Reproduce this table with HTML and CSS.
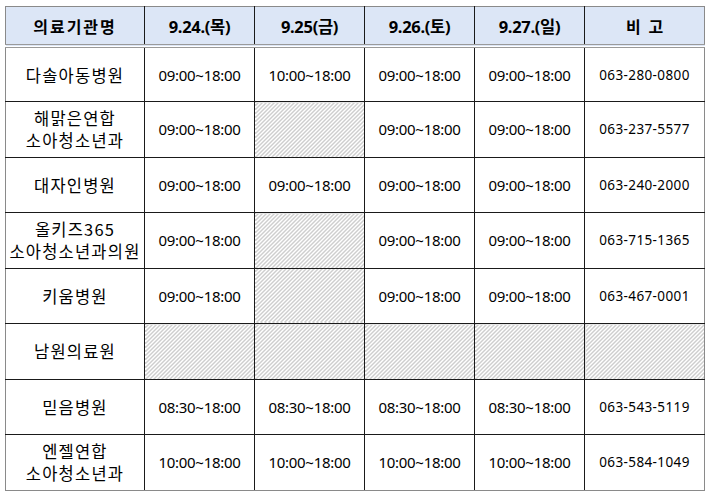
FILE: index.html
```html
<!DOCTYPE html>
<html lang="ko">
<head>
<meta charset="utf-8">
<link rel="stylesheet" href="styles.css">
</head>
<body>
<table class="sched">
  <colgroup>
    <col class="c-name"><col class="c-day"><col class="c-day"><col class="c-day"><col class="c-day"><col class="c-note">
  </colgroup>
  <thead>
    <tr class="head">
      <th class="hname">의료기관명</th><th>9.24.(목)</th><th>9.25(금)</th><th>9.26.(토)</th><th>9.27.(일)</th><th class="hnote">비 고</th>
    </tr>
  </thead>
  <tbody>
    <tr><td class="name">다솔아동병원</td><td>09:00~18:00</td><td>10:00~18:00</td><td>09:00~18:00</td><td>09:00~18:00</td><td class="tel">063-280-0800</td></tr>
    <tr><td class="name">해맑은연합<br>소아청소년과</td><td>09:00~18:00</td><td class="off"></td><td>09:00~18:00</td><td>09:00~18:00</td><td class="tel">063-237-5577</td></tr>
    <tr><td class="name">대자인병원</td><td>09:00~18:00</td><td>09:00~18:00</td><td>09:00~18:00</td><td>09:00~18:00</td><td class="tel">063-240-2000</td></tr>
    <tr><td class="name">올키즈365<br>소아청소년과의원</td><td>09:00~18:00</td><td class="off"></td><td>09:00~18:00</td><td>09:00~18:00</td><td class="tel">063-715-1365</td></tr>
    <tr><td class="name">키움병원</td><td>09:00~18:00</td><td class="off"></td><td>09:00~18:00</td><td>09:00~18:00</td><td class="tel">063-467-0001</td></tr>
    <tr><td class="name">남원의료원</td><td class="off"></td><td class="off"></td><td class="off"></td><td class="off"></td><td class="off"></td></tr>
    <tr><td class="name">믿음병원</td><td>08:30~18:00</td><td>08:30~18:00</td><td>08:30~18:00</td><td>08:30~18:00</td><td class="tel">063-543-5119</td></tr>
    <tr><td class="name">엔젤연합<br>소아청소년과</td><td>10:00~18:00</td><td>10:00~18:00</td><td>10:00~18:00</td><td>10:00~18:00</td><td class="tel">063-584-1049</td></tr>
  </tbody>
</table>
</body>
</html>
```
FILE: styles.css
```css
html, body {
  margin: 0;
  padding: 0;
  background: #fff;
}
body {
  padding: 6px 0 0 5px;
  font-family: "Noto Sans", "Noto Sans CJK KR", sans-serif;
  color: #000;
}
.sched {
  border-collapse: collapse;
  table-layout: fixed;
  width: 700px;
}
.c-name { width: 139px; }
.c-day { width: 110px; }
.c-note { width: 120px; }

.sched th, .sched td {
  border: 1px solid #1a1a1a;
  text-align: center;
  vertical-align: middle;
  padding: 0;
}
.head th {
  background: #dce6f6;
  height: 37px;
  font-size: 16.5px;
  font-weight: 700;
  letter-spacing: -0.3px;
  border-top: 1px solid #8a8a8a;
  border-bottom: 4px double #9a9a9a;
}
.head th.hname {
  font-family: "Noto Sans CJK KR", sans-serif;
  font-size: 16px;
  letter-spacing: 2px;
}
.head th.hnote {
  font-family: "Noto Sans CJK KR", sans-serif;
  font-size: 16px;
  word-spacing: 4px;
}
.sched tbody tr { height: 55.5px; }
.sched td {
  font-size: 15px;
  letter-spacing: -0.3px;
}
.sched td.name {
  font-family: "Noto Sans CJK KR", sans-serif;
  font-size: 16.5px;
  line-height: 22px;
  letter-spacing: 1.2px;
}
.sched td.tel {
  font-size: 13.5px;
  letter-spacing: 0.4px;
}
.sched tr > :first-child { border-left: 1px solid #8a8a8a; }
.sched tr > :last-child { border-right: 1px solid #8a8a8a; }
.sched tbody tr:last-child td { border-bottom: 1px solid #8a8a8a; }
.off {
  background: repeating-linear-gradient(135deg, #ffffff 0 1.6px, #9c9c9c 1.6px 2.6px, #ffffff 2.6px 2.83px);
}
```
